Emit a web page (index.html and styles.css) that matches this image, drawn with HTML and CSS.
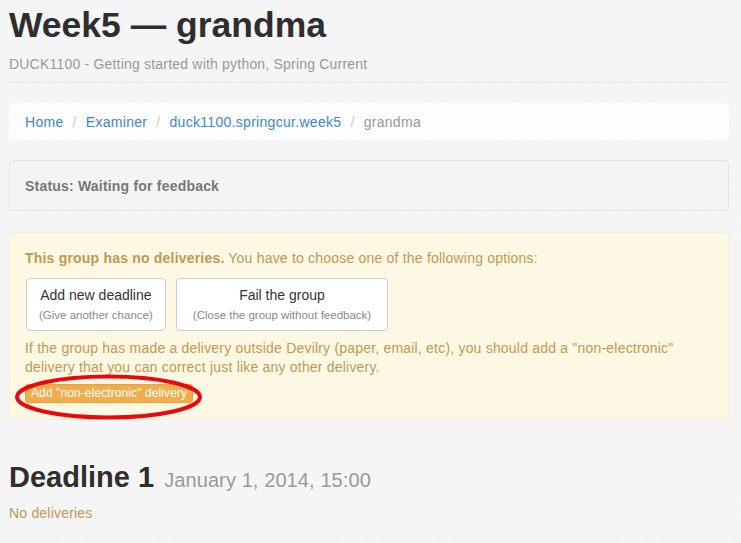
FILE: index.html
```html
<!DOCTYPE html>
<html lang="en">
<head>
<meta charset="utf-8">
<title>Week5 — grandma</title>
<link rel="stylesheet" href="styles.css">
</head>
<body>
<div class="container">
  <header class="page-header">
    <h1 class="title">Week5 — grandma</h1>
    <p class="subtitle">DUCK1100 - Getting started with python, Spring Current</p>
  </header>

  <ol class="breadcrumb">
    <li><a href="#">Home</a></li>
    <li class="sep">/</li>
    <li><a href="#">Examiner</a></li>
    <li class="sep">/</li>
    <li><a href="#">duck1100.springcur.week5</a></li>
    <li class="sep">/</li>
    <li class="active">grandma</li>
  </ol>

  <div class="well">Status: Waiting for feedback</div>

  <div class="alert">
    <p class="alert-lead"><strong>This group has no deliveries.</strong> You have to choose one of the following options:</p>
    <div class="choices">
      <a class="choice" href="#"><span class="choice-main">Add new deadline</span><small class="choice-sub">(Give another chance)</small></a>
      <a class="choice choice-wide" href="#"><span class="choice-main">Fail the group</span><small class="choice-sub">(Close the group without feedback)</small></a>
    </div>
    <p class="alert-text">If the group has made a delivery outside Devilry (paper, email, etc), you should add a "non-electronic" delivery that you can correct just like any other delivery.</p>
    <div class="highlight-wrap">
      <a class="btn-warning" href="#">Add "non-electronic" delivery</a>
      <svg class="ring" width="191" height="48" viewBox="0 0 191 48"><ellipse cx="95.5" cy="24" rx="91.5" ry="20.5" fill="none" stroke="#e8090c" stroke-width="4"/></svg>
    </div>
  </div>

  <h2 class="deadline">Deadline 1 <small class="deadline-date">January 1, 2014, 15:00</small></h2>
  <p class="no-deliveries">No deliveries</p>
</div>
</body>
</html>
```

FILE: styles.css
```css
html, body {
  margin: 0;
  padding: 0;
}
body {
  font-family: "Liberation Sans", Arial, sans-serif;
  font-size: 14px;
  line-height: 20px;
  letter-spacing: 0.2px;
  color: #333;
  background-color: #f4f4f4;
  background-image: repeating-linear-gradient(45deg, rgba(255,255,255,0.3) 0 1px, rgba(0,0,0,0) 1px 3px);
  height: 543px;
  overflow: hidden;
}
.container {
  padding: 0 12px 0 9px;
}
.page-header {
  border-bottom: 1px solid #e6e6e6;
  padding: 5px 0 8px;
}
.title {
  margin: 0;
  font-size: 35.5px;
  line-height: 40px;
  font-weight: bold;
  color: #2e2e2e;
  letter-spacing: 0;
}
.subtitle {
  margin: 9px 0 0;
  color: #999;
  font-size: 14px;
}
.breadcrumb {
  list-style: none;
  margin: 20px 0 20px;
  padding: 9px 16px 8px;
  background: rgba(255,255,255,0.7);
  border-radius: 4px;
  display: flex;
  letter-spacing: 0.3px;
}
.breadcrumb li {
  display: block;
}
.breadcrumb a {
  color: #3e86cc;
  text-decoration: none;
}
.breadcrumb .sep {
  color: #ccc;
  padding: 0 9px;
}
.breadcrumb .active {
  color: #999;
}
.well {
  background: #f4f4f4;
  border: 1px solid #e2e2e2;
  border-radius: 4px;
  padding: 16px 15px 14px;
  line-height: 19px;
  font-weight: bold;
  color: #777;
  margin-bottom: 21px;
}
.alert {
  background: #fcf8e3;
  border: 1px solid #fbeed5;
  border-radius: 4px;
  padding: 15px 15px 16px;
  color: #c09853;
}
.alert p {
  margin: 0;
}
.alert-lead {
  line-height: 20px;
}
.choices {
  display: flex;
  gap: 10px;
  margin: 10px 0 0 1px;
}
.choice {
  display: flex;
  flex-direction: column;
  align-items: center;
  background: #fff;
  border: 1px solid #ccc;
  border-radius: 4px;
  padding: 6px 12px 5px;
  text-decoration: none;
  letter-spacing: 0;
}
.choice-wide {
  padding-left: 16px;
  padding-right: 16px;
}
.choice-main {
  color: #333;
  font-size: 14px;
  line-height: 20px;
}
.choice-sub {
  color: #888;
  font-size: 11.5px;
  line-height: 20px;
}
.alert-text {
  margin-top: 8px !important;
  line-height: 19px;
}
.highlight-wrap {
  position: relative;
  margin-top: 7px;
  display: flex;
}
.btn-warning {
  display: inline-block;
  background: #f0ad4e;
  border: 1px solid #eea236;
  border-radius: 3px;
  color: #fff;
  font-size: 12px;
  line-height: 17px;
  padding: 0 5px;
  letter-spacing: 0.1px;
  text-decoration: none;
}
.ring {
  position: absolute;
  left: -12px;
  top: -11px;
  pointer-events: none;
}
.deadline {
  margin: 40px 0 0;
  font-size: 29px;
  line-height: 34px;
  font-weight: bold;
  color: #2e2e2e;
  letter-spacing: 0;
}
.deadline-date {
  font-size: 20px;
  font-weight: normal;
  color: #999;
  margin-left: 2px;
  letter-spacing: 0.1px;
}
.no-deliveries {
  margin: 6px 0 0;
  color: #c09853;
}
```
